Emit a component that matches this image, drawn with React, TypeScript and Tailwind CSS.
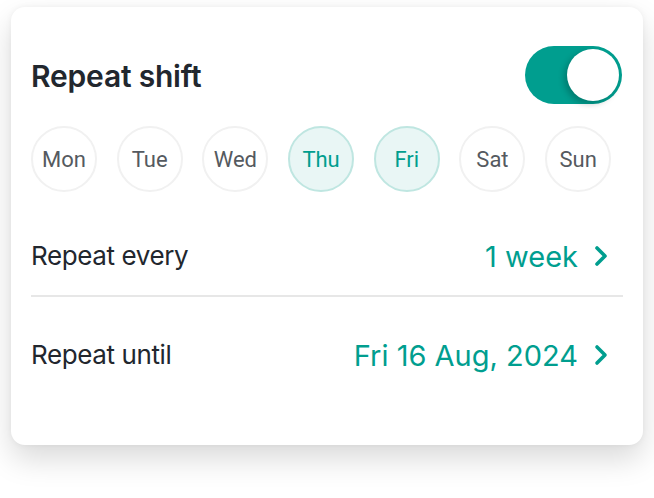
import { useState } from "react";

const DAYS = ["Mon", "Tue", "Wed", "Thu", "Fri", "Sat", "Sun"];

function Chevron() {
  return (
    <svg width="16" height="24" viewBox="0 0 16 24" className="shrink-0">
      <polyline
        points="4,4 12,12 4,20"
        fill="none"
        stroke="#009e8f"
        strokeWidth={3.6}
        strokeLinecap="round"
        strokeLinejoin="round"
      />
    </svg>
  );
}

export default function App() {
  const [on, setOn] = useState(true);
  const [selected, setSelected] = useState<string[]>(["Thu", "Fri"]);

  const toggleDay = (d: string) =>
    setSelected((s) => (s.includes(d) ? s.filter((x) => x !== d) : [...s, d]));

  return (
    <div className="h-[498px] w-[654px] bg-white pt-[7px] pl-[11px] font-['Inter',sans-serif]">
      <div className="h-[438px] w-[632px] rounded-[14px] bg-white px-[20px] pt-[39px] shadow-[0_14px_30px_rgba(0,0,0,0.15),0_0_6px_rgba(0,0,0,0.05)]">
        {/* Titel + toggle */}
        <div className="flex h-[58px] items-center justify-between">
          <span className="pt-[2px] text-[30px] font-semibold leading-none tracking-[-0.2px] text-[#22272e]">
            Repeat shift
          </span>
          <button
            onClick={() => setOn(!on)}
            className={`relative mr-[1px] h-[58px] w-[97px] rounded-full ${on ? "bg-[#009e8f]" : "bg-[#d5d5d5]"}`}
          >
            <span
              className={`absolute top-[3px] h-[52px] w-[52px] rounded-full bg-white shadow-[-3px_3px_6px_rgba(0,0,0,0.22)] ${on ? "right-[3px]" : "left-[3px]"}`}
            />
          </button>
        </div>

        {/* Ugedage */}
        <div className="mt-[22px] flex gap-[19.7px] font-['Roboto',sans-serif]">
          {DAYS.map((d) => {
            const active = selected.includes(d);
            return (
              <button
                key={d}
                onClick={() => toggleDay(d)}
                className={`flex h-[66px] w-[66px] items-center justify-center rounded-full border-2 text-[22px] ${
                  active
                    ? "border-[#bfe6e1] bg-[#e9f6f5] text-[#009e8f]"
                    : "border-[#f1f1f1] bg-white text-[#555a60]"
                }`}
              >
                {d}
              </button>
            );
          })}
        </div>

        {/* Repeat every */}
        <div className="mt-[25px] flex h-[78px] items-center justify-between">
          <span className="text-[26px] leading-none tracking-[-0.4px] text-[#22272e]">Repeat every</span>
          <span className="mr-[14px] flex items-center gap-[15px] text-[29px] leading-none text-[#009e8f]">
            1 week
            <Chevron />
          </span>
        </div>
        <div className="h-[2px] bg-[#e7e7e7]" />

        {/* Repeat until */}
        <div className="flex h-[116px] items-center justify-between">
          <span className="text-[26px] leading-none tracking-[-0.4px] text-[#22272e]">Repeat until</span>
          <span className="mr-[14px] flex items-center gap-[15px] text-[29px] leading-none text-[#009e8f]">
            Fri 16 Aug, 2024
            <Chevron />
          </span>
        </div>
      </div>
    </div>
  );
}
